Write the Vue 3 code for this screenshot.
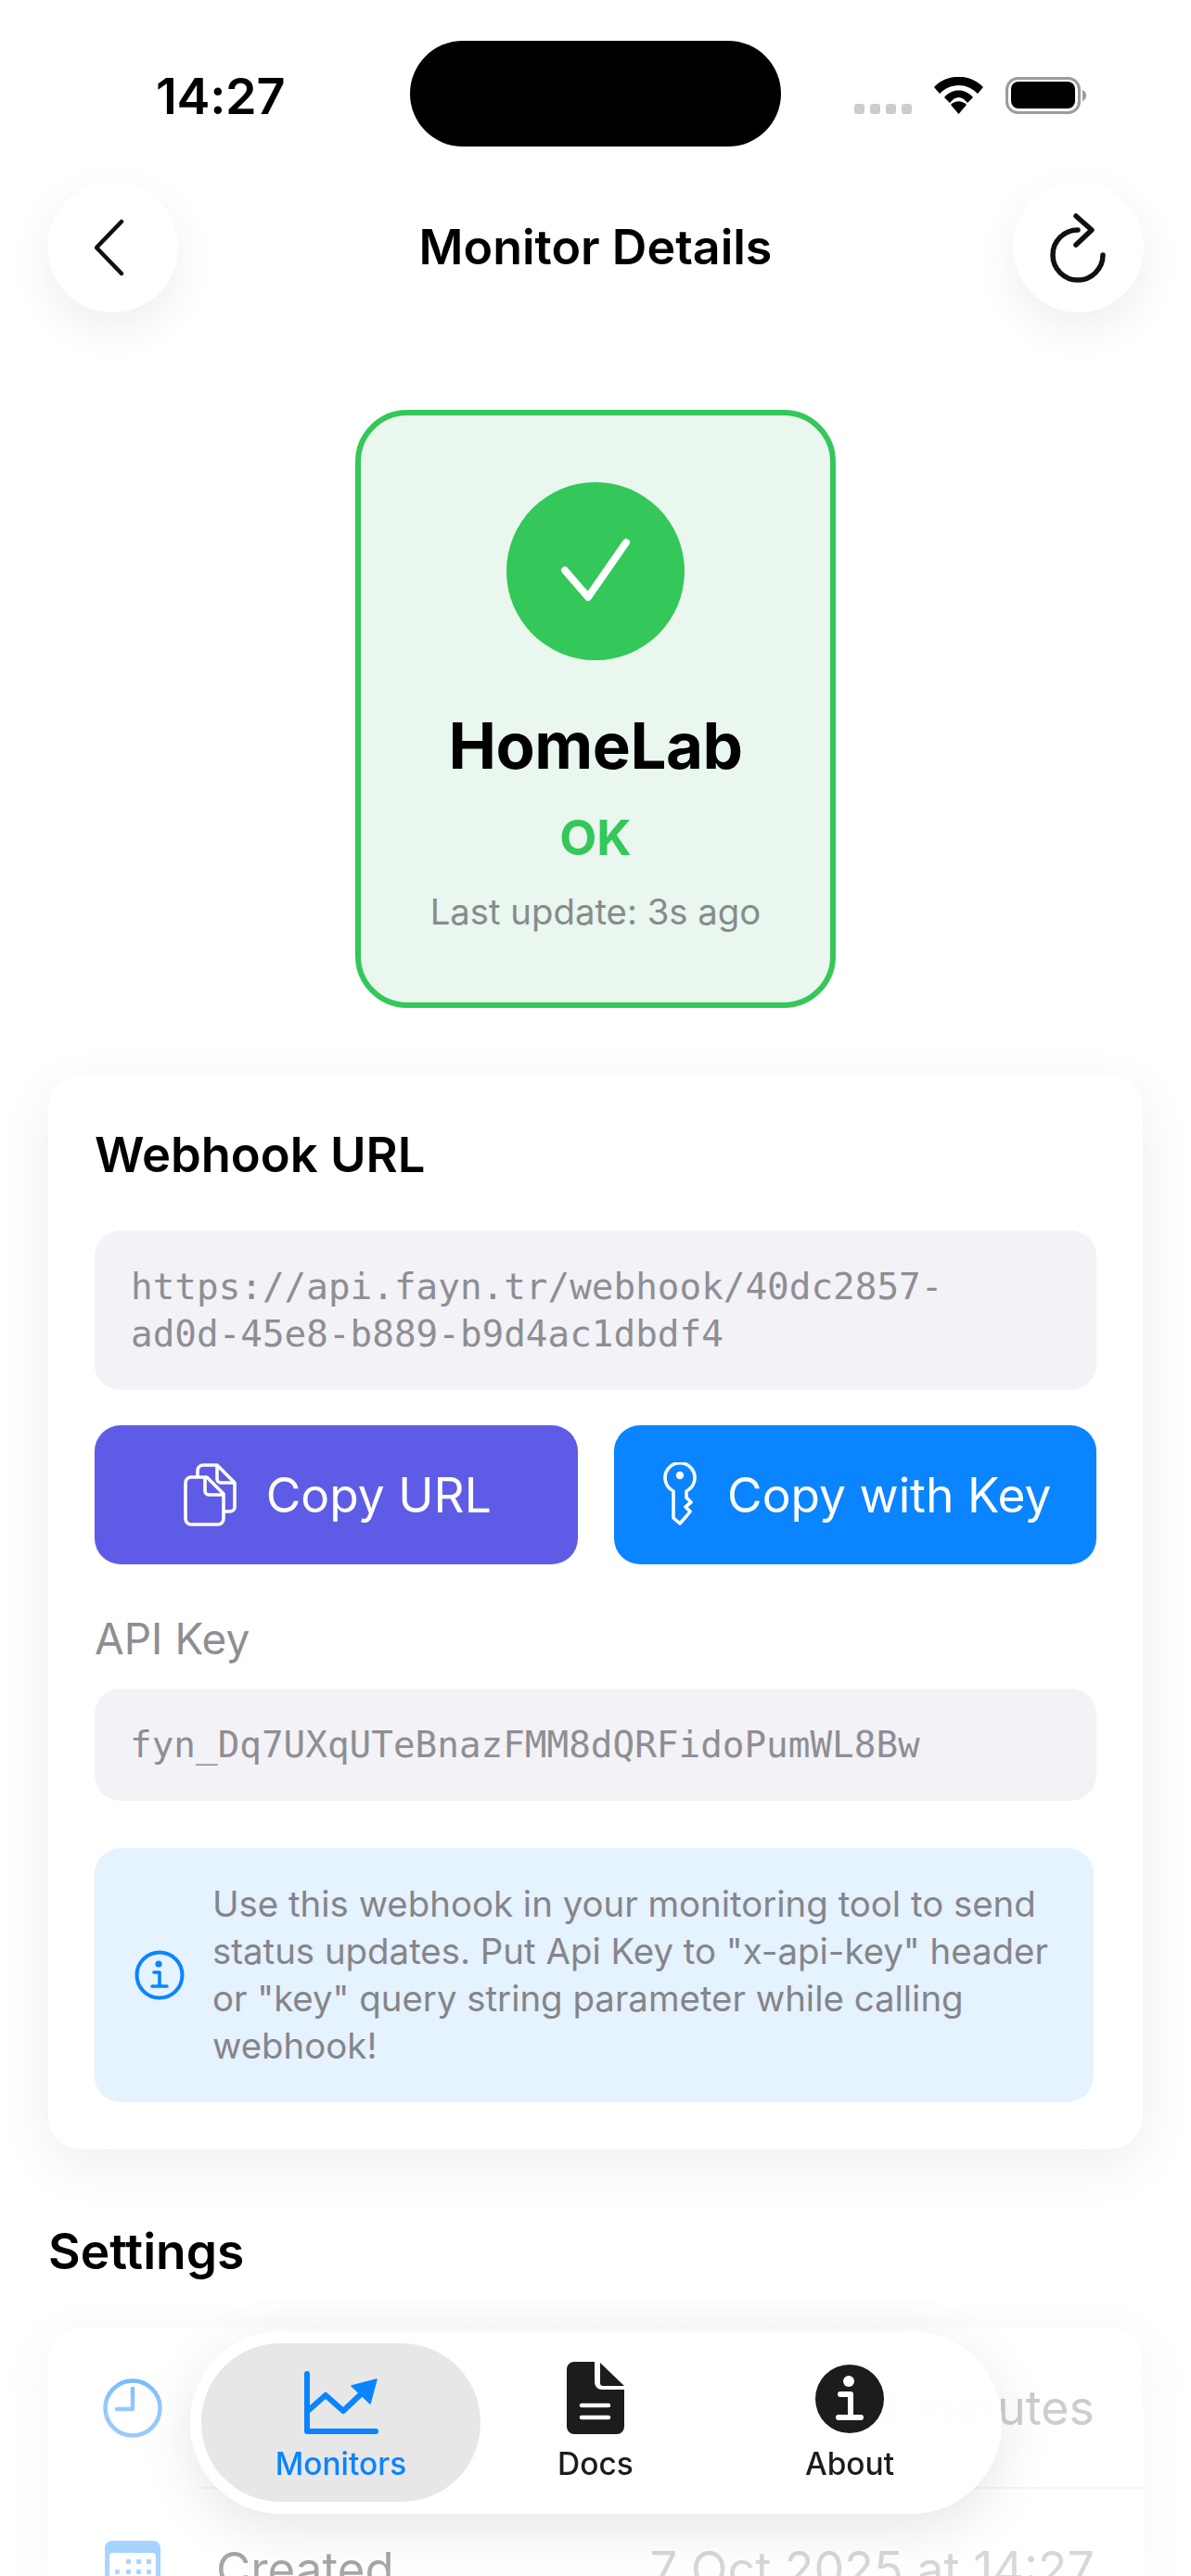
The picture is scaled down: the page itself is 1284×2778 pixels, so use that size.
<script setup>
const urlLines = ['https://api.fayn.tr/webhook/40dc2857-', 'ad0d-45e8-b889-b9d4ac1dbdf4'];
const tabs = ['Monitors', 'Docs', 'About'];
</script>

<template>
  <main class="screen">
    <header class="status">
      <span class="time">14:27</span>
      <div class="island"></div>
      <div class="status-icons">
        <div class="signal"><i></i><i></i><i></i><i></i></div>
        <svg class="wifi" viewBox="0 0 53 40">
          <path d="M0 11 C14 -4 39 -4 53 11 L47 18 C35 6 18 6 6 18 Z" fill="#000" />
          <path d="M11 22 C19 12 34 12 42 22 L36 28 C30 20 23 20 17 28 Z" fill="#000" />
          <path d="M18 30 C23 25 30 25 35 30 L26.5 40 Z" fill="#000" />
        </svg>
        <svg class="battery" viewBox="0 0 87 40">
          <rect x="1.5" y="1.5" width="78" height="37" rx="12" fill="none" stroke="#9c9c9c" stroke-width="3" />
          <rect x="6" y="5" width="69" height="29" rx="8" fill="#000" />
          <path d="M83 14 C85.500 15 87 17 87 20 C87 23 85.500 25 83 26 Z" fill="#9c9c9c" />
        </svg>
      </div>
    </header>

    <nav class="topbar">
      <button class="round">
        <svg width="40" height="62" viewBox="0 0 40 62" fill="none">
          <path d="M29 3 L2 31 L29 59" stroke="#111" stroke-width="4.5" stroke-linecap="round" stroke-linejoin="round" />
        </svg>
      </button>
      <h1>Monitor Details</h1>
      <button class="round">
        <svg width="66" height="80" viewBox="0 0 66 80" fill="none">
          <path d="M33 21 A27 27 0 1 0 60 48" stroke="#111" stroke-width="5.5" stroke-linecap="round" />
          <path d="M31 6 L48 21 L31 37" stroke="#111" stroke-width="5.5" stroke-linecap="round" stroke-linejoin="round" />
        </svg>
      </button>
    </nav>

    <section class="status-wrap">
      <div class="status-card">
        <div class="ok-circle">
          <svg width="76" height="72" viewBox="0 0 76 72" fill="none">
            <path d="M5 35 L30 64 L71 5" stroke="#fff" stroke-width="8" stroke-linecap="round" stroke-linejoin="round" />
          </svg>
        </div>
        <div class="name">HomeLab</div>
        <div class="state">OK</div>
        <div class="updated">Last update: 3s ago</div>
      </div>
    </section>

    <section class="card webhook">
      <h2>Webhook URL</h2>
      <div class="code url">
        <div v-for="line in urlLines" :key="line">{{ line }}</div>
      </div>
      <div class="actions">
        <button class="action indigo">
          <svg width="58" height="68" viewBox="0 0 58 68" fill="none" stroke="#fff" stroke-width="3.6" stroke-linejoin="round" stroke-linecap="round">
            <path d="M8 15 H25 L43 33 V60 A6 6 0 0 1 37 66 H8 A6 6 0 0 1 2 60 V21 A6 6 0 0 1 8 15 Z" />
            <path d="M23 16 V30 A4 4 0 0 0 27 34 H42" />
            <path d="M15 14 V8 A6 6 0 0 1 21 2 H36 L55 21 V47 A5 5 0 0 1 50 52 H44" />
            <path d="M36 3 V17 A4 4 0 0 0 40 21 H54" />
          </svg>
          <span>Copy URL</span>
        </button>
        <button class="action blue">
          <svg width="40" height="70" viewBox="0 0 40 70" fill="none" stroke="#fff" stroke-width="3.6" stroke-linejoin="round" stroke-linecap="round">
            <path d="M13 31 A16 16 0 1 1 27 31 V38 L32 43 L26 48 L31 53 L27 58 L20 66 L13 60 Z" />
            <circle cx="20" cy="14" r="4.2" fill="#fff" stroke="none" />
          </svg>
          <span>Copy with Key</span>
        </button>
      </div>
      <div class="label">API Key</div>
      <div class="code key">fyn_Dq7UXqUTeBnazFMM8dQRFidoPumWL8Bw</div>
      <div class="info">
        <svg class="info-icon" width="54" height="54" viewBox="0 0 54 54" fill="none">
          <circle cx="27" cy="27" r="24.5" stroke="#0a84ff" stroke-width="4" />
          <circle cx="26" cy="15" r="3.6" fill="#0a84ff" />
          <path d="M21 24 H27 V39 M19 39 H35" stroke="#0a84ff" stroke-width="3.6" stroke-linecap="round" stroke-linejoin="round" />
        </svg>
        <p>Use this webhook in your monitoring tool to send status updates. Put Api Key to "x-api-key" header or "key" query string parameter while calling webhook!</p>
      </div>
    </section>

    <h2 class="settings-title">Settings</h2>
    <section class="card settings">
      <div class="row">
        <svg width="66" height="66" viewBox="0 0 66 66" fill="none">
          <circle cx="33" cy="33" r="29.5" stroke="#0a84ff" stroke-width="4.5" />
          <path d="M33 12 V34 H16" stroke="#0a84ff" stroke-width="4.5" stroke-linecap="round" stroke-linejoin="round" />
        </svg>
        <div class="row-body">
          <span class="row-label">Expire After</span>
          <span class="row-value">10 minutes</span>
        </div>
      </div>
      <div class="row">
        <svg width="66" height="66" viewBox="0 0 66 66" fill="none">
          <rect x="3" y="2" width="60" height="62" rx="8" fill="#0a84ff" />
          <rect x="8" y="15" width="50" height="44" rx="4" fill="#fff" />
          <g fill="#0a84ff">
            <rect x="26" y="22" width="5" height="5" rx="1" /><rect x="37" y="22" width="5" height="5" rx="1" /><rect x="48" y="22" width="5" height="5" rx="1" />
            <rect x="14" y="33" width="5" height="5" rx="1" /><rect x="26" y="33" width="5" height="5" rx="1" /><rect x="37" y="33" width="5" height="5" rx="1" /><rect x="48" y="33" width="5" height="5" rx="1" />
          </g>
        </svg>
        <div class="row-body">
          <span class="row-label">Created</span>
          <span class="row-value">7 Oct 2025 at 14:27</span>
        </div>
      </div>
    </section>

    <div class="fade"></div>

    <div class="tabbar">
      <div class="tab active">
        <svg width="80" height="68" viewBox="0 0 80 68" fill="none">
          <path d="M3 3 V65 H77" stroke="#0a84ff" stroke-width="6" stroke-linecap="round" stroke-linejoin="round" />
          <path d="M5 42 L23 26 L42 43 L62 24" stroke="#0a84ff" stroke-width="6" stroke-linecap="round" stroke-linejoin="round" />
          <path d="M51 16 L78 9 L71 35 Z" fill="#0a84ff" stroke="#0a84ff" stroke-width="1.5" stroke-linejoin="round" />
        </svg>
        <span>{{ tabs[0] }}</span>
      </div>
      <div class="tab">
        <svg width="62" height="78" viewBox="0 0 62 78" fill="none">
          <path d="M8 0 H30 V22 A8 8 0 0 0 38 30 H62 V70 A8 8 0 0 1 54 78 H8 A8 8 0 0 1 0 70 V8 A8 8 0 0 1 8 0 Z" fill="#1c1c1e" />
          <path d="M36 1 L62 26 H39 A3 3 0 0 1 36 23 Z" fill="#1c1c1e" />
          <path d="M16 47 H45 M16 60 H45" stroke="#fff" stroke-width="4.5" stroke-linecap="round" />
        </svg>
        <span>{{ tabs[1] }}</span>
      </div>
      <div class="tab">
        <svg width="76" height="76" viewBox="0 0 76 76" fill="none">
          <circle cx="38" cy="38" r="37" fill="#1c1c1e" />
          <circle cx="37" cy="19" r="6" fill="#fff" />
          <path d="M28 33 H39 V58 M26 58 H50" stroke="#fff" stroke-width="6" stroke-linecap="round" stroke-linejoin="round" />
        </svg>
        <span>{{ tabs[2] }}</span>
      </div>
    </div>
  </main>
</template>

<style>
html, body {
  margin: 0;
  background: #fff;
}
</style>

<style scoped>
.screen {
  position: relative;
  width: 1284px;
  height: 2778px;
  overflow: hidden;
  background: #fff;
  color: #000;
  font-family: Inter, "Noto Sans", sans-serif;
}

.status {
  display: grid;
  grid-template-columns: 274px 400px 1fr;
  align-items: center;
  height: 114px;
  margin: 44px 0 38px;
  padding-left: 168px;
}

.time {
  font-size: 54px;
  font-weight: 600;
  line-height: 1;
  letter-spacing: -0.3px;
  margin-top: 6px;
}

.island {
  height: 114px;
  background: #000;
  border-radius: 57px;
}

.status-icons {
  display: flex;
  align-items: flex-end;
  justify-content: flex-end;
  padding-right: 113px;
  height: 40px;
  margin-top: 4px;
}

.signal {
  display: flex;
  gap: 6px;
  margin-right: 24px;
}

.signal i {
  width: 11px;
  height: 11px;
  border-radius: 3px;
  background: #cccccc;
}

.wifi {
  width: 53px;
  height: 40px;
  margin-right: 24px;
}

.battery {
  width: 87px;
  height: 40px;
}

.topbar {
  display: flex;
  align-items: center;
  justify-content: space-between;
  padding: 0 51px;
  height: 141px;
}

.topbar h1 {
  margin: 0;
  font-size: 52px;
  font-weight: 600;
}

.round {
  display: flex;
  align-items: center;
  justify-content: center;
  width: 141px;
  height: 141px;
  padding: 0;
  border: none;
  border-radius: 50%;
  background: #fff;
  box-shadow: 0 16px 48px rgba(0, 0, 0, 0.07);
}

.status-wrap {
  display: flex;
  justify-content: center;
  margin-top: 105px;
}

.status-card {
  display: flex;
  flex-direction: column;
  align-items: center;
  box-sizing: border-box;
  width: 518px;
  height: 645px;
  padding-top: 72px;
  background: #e9f7ee;
  border: 6px solid #34c759;
  border-radius: 56px;
}

.ok-circle {
  display: flex;
  align-items: center;
  justify-content: center;
  width: 192px;
  height: 192px;
  border-radius: 50%;
  background: #34c759;
}

.name {
  margin-top: 51px;
  font-size: 69px;
  line-height: 82px;
  font-weight: 700;
  letter-spacing: -0.5px;
}

.state {
  margin-top: 29px;
  font-size: 52px;
  line-height: 60px;
  font-weight: 700;
  color: #34c759;
}

.updated {
  margin-top: 27px;
  font-size: 38.3px;
  line-height: 44px;
  color: #868c8c;
}

.card {
  margin: 0 52px;
  border-radius: 36px;
  background: #fff;
  box-shadow: 0 16px 60px rgba(0, 0, 0, 0.07);
}

.webhook {
  box-sizing: border-box;
  height: 1158px;
  margin-top: 73px;
  padding: 50px;
}

.webhook h2 {
  position: relative;
  top: 3px;
}

.webhook h2,
.settings-title {
  margin: 0;
  font-size: 52.5px;
  line-height: 64px;
  font-weight: 600;
}

.code {
  box-sizing: border-box;
  background: #f2f2f7;
  border-radius: 28px;
  color: #8e8e93;
  font-family: "DejaVu Sans Mono", "Liberation Mono", monospace;
  font-size: 39.3px;
  line-height: 51px;
}

.url {
  height: 172px;
  margin-top: 53px;
  padding: 35px 39px;
}

.actions {
  display: flex;
  gap: 39px;
  margin-top: 38px;
}

.action {
  display: flex;
  align-items: center;
  justify-content: center;
  gap: 31px;
  flex: 1;
  height: 150px;
  padding: 0 0 0 3px;
  border: none;
  border-radius: 28px;
  color: #fff;
  font-family: inherit;
  font-size: 51.5px;
  font-weight: 400;
}

.indigo {
  background: #5e5ce6;
}

.blue {
  background: #0a84ff;
}

.label {
  margin-top: 52px;
  font-size: 46px;
  line-height: 56px;
  color: #8e8e93;
}

.key {
  height: 121px;
  margin-top: 26px;
  padding: 35px 39px 35px 38px;
}

.info {
  display: flex;
  align-items: center;
  gap: 30px;
  box-sizing: border-box;
  width: 1077px;
  height: 274px;
  margin-top: 51px;
  padding: 0 40px 0 43px;
  background: #e5f2ff;
  border-radius: 28px;
}

.info-icon {
  flex: none;
}

.info p {
  margin: 0;
  color: #85858a;
  font-size: 38.4px;
  line-height: 51px;
}

.settings-title {
  margin: 76px 52px 0;
  font-size: 53.3px;
  position: relative;
  top: 2px;
}

.settings {
  margin-top: 52px;
}

.row {
  display: flex;
  align-items: center;
  gap: 41px;
  height: 174px;
  padding-left: 58px;
}

.row-body {
  display: flex;
  align-items: center;
  flex: 1;
  align-self: stretch;
  padding: 0 52px 0 16px;
  border-bottom: 2px solid #e8e8e8;
}

.row-label {
  color: #000;
  font-size: 51px;
  font-weight: 400;
}

.row-value {
  margin-left: auto;
  color: #8e8e93;
  font-size: 52px;
}

.fade {
  position: absolute;
  left: 0;
  right: 0;
  top: 2470px;
  bottom: 0;
  background: linear-gradient(rgba(255, 255, 255, 0), rgba(255, 255, 255, 0.56) 40%, rgba(255, 255, 255, 0.66));
}

.tabbar {
  position: absolute;
  left: 205px;
  top: 2514px;
  display: flex;
  box-sizing: border-box;
  width: 875px;
  height: 197px;
  padding: 13px 12px;
  border-radius: 98px;
  background: rgba(255, 255, 255, 0.93);
  backdrop-filter: blur(3px);
  box-shadow: 0 16px 60px rgba(0, 0, 0, 0.1), inset 0 0 0 3px rgba(255, 255, 255, 0.9);
}

.tab {
  display: flex;
  flex: none;
  flex-direction: column;
  align-items: center;
  justify-content: flex-end;
  width: 274px;
  height: 171px;
  padding-bottom: 22px;
  box-sizing: border-box;
  border-radius: 85px;
  color: #1c1c1e;
  font-size: 33.5px;
  line-height: 38px;
  font-weight: 500;
}

.tab svg {
  margin-bottom: 13px;
}

.tab.active {
  width: 301px;
  margin-right: -13px;
  background: rgba(228, 228, 228, 0.88);
  color: #0a84ff;
}
</style>
